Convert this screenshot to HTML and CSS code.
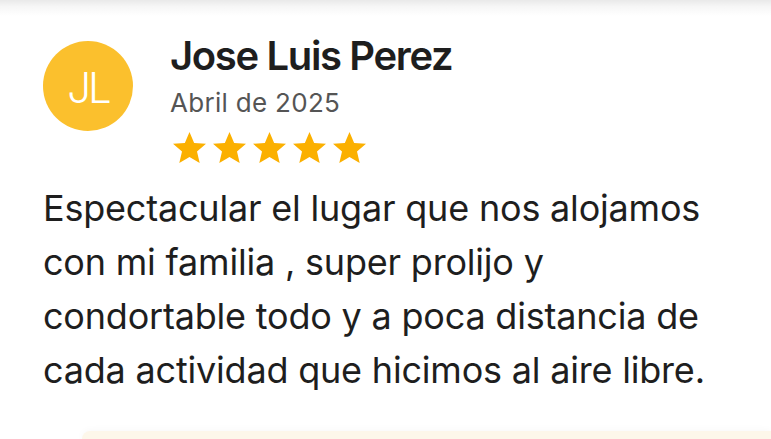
FILE: index.html
```html
<!DOCTYPE html>
<html lang="es">
<head>
<meta charset="utf-8">
<link rel="stylesheet" href="styles.css">
</head>
<body>
<div class="page">
  <div class="prev-card"></div>
  <article class="review">
    <header class="head">
      <div class="avatar">JL</div>
      <div class="meta">
        <h2 class="name">Jose Luis Perez</h2>
        <div class="date">Abril de 2025</div>
        <div class="stars">
          <svg viewBox="1 1.5 22 20.8" preserveAspectRatio="none"><path d="M12 1.5l3.1 7.3 7.9.6-6 5.2 1.8 7.7L12 18.2l-6.8 4.1L7 14.6l-6-5.2 7.9-.6z"/></svg>
          <svg viewBox="1 1.5 22 20.8" preserveAspectRatio="none"><path d="M12 1.5l3.1 7.3 7.9.6-6 5.2 1.8 7.7L12 18.2l-6.8 4.1L7 14.6l-6-5.2 7.9-.6z"/></svg>
          <svg viewBox="1 1.5 22 20.8" preserveAspectRatio="none"><path d="M12 1.5l3.1 7.3 7.9.6-6 5.2 1.8 7.7L12 18.2l-6.8 4.1L7 14.6l-6-5.2 7.9-.6z"/></svg>
          <svg viewBox="1 1.5 22 20.8" preserveAspectRatio="none"><path d="M12 1.5l3.1 7.3 7.9.6-6 5.2 1.8 7.7L12 18.2l-6.8 4.1L7 14.6l-6-5.2 7.9-.6z"/></svg>
          <svg viewBox="1 1.5 22 20.8" preserveAspectRatio="none"><path d="M12 1.5l3.1 7.3 7.9.6-6 5.2 1.8 7.7L12 18.2l-6.8 4.1L7 14.6l-6-5.2 7.9-.6z"/></svg>
        </div>
      </div>
    </header>
    <p class="text">Espectacular el lugar que nos alojamos con mi familia , super prolijo y condortable todo y a poca distancia de cada actividad que hicimos al aire libre.</p>
  </article>
  <div class="next-card"></div>
</div>
</body>
</html>
```
FILE: styles.css
```css
html, body {
  margin: 0;
  padding: 0;
  background: #ffffff;
}
body {
  font-family: "Inter", "Noto Sans", sans-serif;
  color: #1f1f1f;
  width: 771px;
  height: 439px;
  overflow: hidden;
}
.page {
  position: relative;
  height: 439px;
  overflow: hidden;
}
.prev-card {
  height: 16px;
  background: linear-gradient(to bottom, #e9e9e9 0%, #f6f6f6 40%, #ffffff 100%);
}
.review {
  padding: 18px 0 0 43px;
}
.head {
  display: flex;
  align-items: flex-start;
  gap: 37px;
}
.avatar {
  width: 90px;
  height: 90px;
  margin-top: 7px;
  box-sizing: border-box;
  padding-top: 4px;
  border-radius: 50%;
  background: #fbc02d;
  color: #ffffff;
  font-size: 42px;
  line-height: 42px;
  font-weight: 300;
  letter-spacing: -3px;
  display: flex;
  align-items: center;
  justify-content: center;
  flex-shrink: 0;
}
.meta {
  display: flex;
  flex-direction: column;
}
.name {
  margin: 0;
  font-size: 40px;
  font-weight: 600;
  letter-spacing: -1.35px;
  line-height: 44px;
  color: #1e1e1e;
}
.date {
  font-size: 26px;
  color: #555555;
  letter-spacing: 0.3px;
  line-height: 30px;
  margin-top: 10px;
}
.stars {
  display: flex;
  gap: 7px;
  margin-top: 14px;
  margin-left: 3px;
  height: 31px;
}
.stars svg {
  width: 33px;
  height: 31px;
  fill: #fbb000;
}
.text {
  margin: 18px 0 0 0;
  width: 680px;
  font-size: 36px;
  line-height: 54px;
  letter-spacing: -0.2px;
  color: #1e1e1e;
}
.next-card {
  position: absolute;
  left: 82px;
  right: 0;
  bottom: 0;
  height: 8px;
  background: #fdf7ea;
  border-radius: 16px 0 0 0;
  box-shadow: 0 0 8px rgba(0, 0, 0, 0.04);
}
```
